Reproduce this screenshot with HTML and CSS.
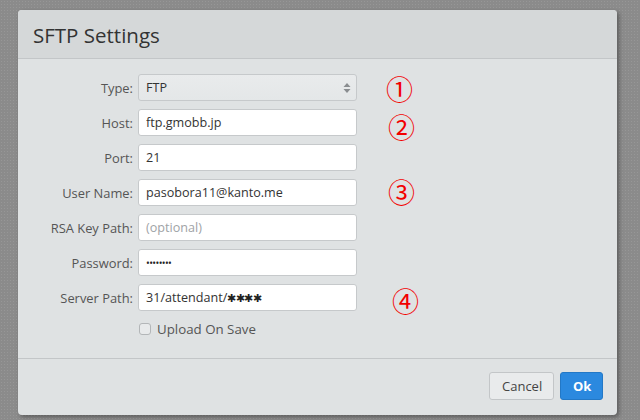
FILE: index.html
```html
<!DOCTYPE html>
<html lang="en">
<head>
    <meta charset="UTF-8" />
    <title>SFTP Settings</title>
    <link rel="stylesheet" href="styles.css">
</head>
<body>
    <div class="dialog">
        <div class="dialog-header">SFTP Settings</div>
        <div class="dialog-body">
            <form class="settings-form">
                <label class="field-label" for="type">Type:</label>
                <div class="select-box" id="type">
                    <span>FTP</span>
                    <svg class="select-arrows" width="8" height="12" viewBox="0 0 8 12">
                        <path d="M4 1 L7.5 5 H0.5 Z" fill="#8a8d90"/>
                        <path d="M4 11 L7.5 7 H0.5 Z" fill="#8a8d90"/>
                    </svg>
                </div>

                <label class="field-label" for="host">Host:</label>
                <input class="field-input" id="host" type="text" value="ftp.gmobb.jp">

                <label class="field-label" for="port">Port:</label>
                <input class="field-input" id="port" type="text" value="21">

                <label class="field-label" for="user">User Name:</label>
                <input class="field-input" id="user" type="text" value="pasobora11@kanto.me">

                <label class="field-label" for="rsa">RSA Key Path:</label>
                <input class="field-input" id="rsa" type="text" placeholder="(optional)">

                <label class="field-label" for="password">Password:</label>
                <input class="field-input password" id="password" type="text" value="••••••••">

                <label class="field-label" for="path">Server Path:</label>
                <div class="field-input path-box" id="path">31/attendant/<span class="masked">✱✱✱✱</span></div>

                <div></div>
                <label class="check-row">
                    <span class="check-box"></span>
                    Upload On Save
                </label>
            </form>

            <span class="note note-1">①</span>
            <span class="note note-2">②</span>
            <span class="note note-3">③</span>
            <span class="note note-4">④</span>
        </div>
        <div class="dialog-footer">
            <button class="btn btn-cancel">Cancel</button>
            <button class="btn btn-ok">Ok</button>
        </div>
    </div>
</body>
</html>
```

FILE: styles.css
```css
* {
    box-sizing: border-box;
}

body {
    margin: 0;
    width: 640px;
    height: 420px;
    overflow: hidden;
    font-family: 'Source Sans Pro', 'Open Sans', 'Noto Sans', sans-serif;
    background-color: #8b8b8b;
    background-image: radial-gradient(#979797 0.6px, transparent 0.8px);
    background-size: 3px 3px;
}

.dialog {
    margin: 10px 0 0 18px;
    width: 599px;
    height: 405px;
    background: #dfe2e3;
    border-radius: 4px;
    box-shadow: 2px 2px 4px rgba(0, 0, 0, 0.35);
    display: flex;
    flex-direction: column;
    overflow: hidden;
}

.dialog-header {
    height: 49px;
    padding: 11px 0 0 15px;
    background: #d5d8d9;
    border-bottom: 1px solid #c3c6c8;
    font-size: 20.5px;
    color: #333;
}

.dialog-body {
    position: relative;
    flex: 1;
    padding: 15px 0 0 0;
    border-bottom: 1px solid #c3c6c8;
}

.settings-form {
    display: grid;
    grid-template-columns: 115px 219px;
    grid-auto-rows: 27px;
    column-gap: 5px;
    row-gap: 8px;
    margin: 0;
}

.field-label {
    display: flex;
    align-items: center;
    justify-content: flex-end;
    font-size: 12.9px;
    color: #555;
}

.field-input,
.select-box {
    width: 219px;
    height: 27px;
    padding: 0 7px;
    border: 1px solid #c6c9cb;
    border-radius: 3px;
    font-family: inherit;
    font-size: 12.6px;
    color: #333;
    background: #fff;
    outline: none;
}

.field-input::placeholder {
    color: #a0a3a6;
}

.field-input.password {
    font-size: 10px;
    letter-spacing: -0.6px;
    color: #222;
}

.path-box {
    display: flex;
    align-items: center;
}

.masked {
    font-size: 10.5px;
    letter-spacing: -0.6px;
    color: #222;
}

.select-box {
    display: flex;
    align-items: center;
    justify-content: space-between;
    background: linear-gradient(#e9ebec, #e4e7e8);
    padding-right: 5px;
}

.check-row {
    display: flex;
    align-items: center;
    align-self: start;
    height: 19px;
    gap: 6px;
    font-size: 13.3px;
    color: #555;
    padding-left: 1px;
}

.check-box {
    width: 12px;
    height: 12px;
    border: 1px solid #b3b6b8;
    border-radius: 3px;
    background: #e8eaeb;
}

.note {
    position: absolute;
    font-family: 'Noto Sans CJK JP', sans-serif;
    font-size: 27px;
    line-height: 1;
    color: #f20000;
}

.note-1 { left: 368px; top: 16px; }
.note-2 { left: 370px; top: 54px; }
.note-3 { left: 370px; top: 119px; }
.note-4 { left: 374px; top: 228px; }

.dialog-footer {
    display: flex;
    justify-content: flex-end;
    gap: 6px;
    height: 56px;
    padding: 13px 14px 0 0;
}

.btn {
    height: 28px;
    padding: 0 12px;
    border-radius: 3px;
    font-family: inherit;
    font-size: 13px;
    cursor: pointer;
}

.btn-cancel {
    width: 65px;
    background: #e9ebec;
    border: 1px solid #c3c6c8;
    color: #444;
}

.btn-ok {
    width: 43px;
    background: #2b89df;
    border: 1px solid #2378c6;
    color: #fff;
    font-weight: bold;
}
```
